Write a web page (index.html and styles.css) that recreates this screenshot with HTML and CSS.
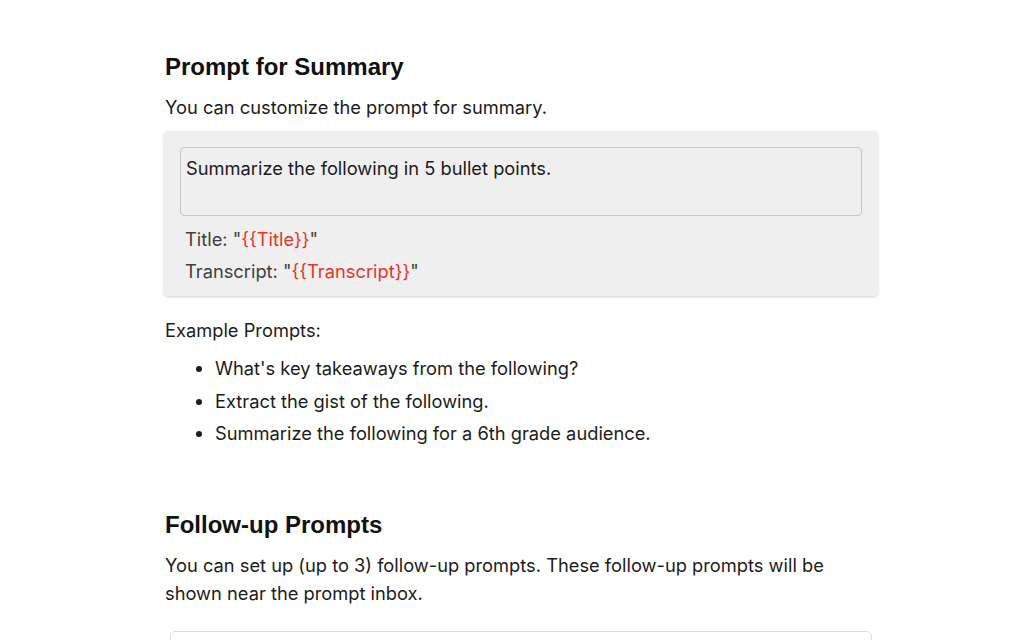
FILE: index.html
```html
<!DOCTYPE html>
<html>
<head>
<meta charset="utf-8">
<link rel="stylesheet" href="styles.css">
</head>
<body>
<main class="page">
  <section class="section">
    <h2 class="title">Prompt for Summary</h2>
    <p class="desc">You can customize the prompt for summary.</p>
    <div class="prompt-card">
      <div class="prompt-input">Summarize the following in 5 bullet points.</div>
      <div class="var-line first">Title: "<span class="var">{{Title}}</span>"</div>
      <div class="var-line">Transcript: "<span class="var">{{Transcript}}</span>"</div>
    </div>
    <p class="examples-label">Example Prompts:</p>
    <ul class="examples">
      <li>What's key takeaways from the following?</li>
      <li>Extract the gist of the following.</li>
      <li>Summarize the following for a 6th grade audience.</li>
    </ul>
  </section>
  <section class="section section-followup">
    <h2 class="title">Follow-up Prompts</h2>
    <p class="desc desc-wrap">You can set up (up to 3) follow-up prompts. These follow-up prompts will be shown near the prompt inbox.</p>
    <div class="followup-box"></div>
  </section>
</main>
</body>
</html>
```

FILE: styles.css
```css
html, body {
  margin: 0;
  padding: 0;
  background: #ffffff;
}
body {
  font-family: Inter, "Liberation Sans", Arial, sans-serif;
  color: #1c1c1c;
  font-size: 18.3px;
}
.page {
  width: 714px;
  margin-left: 164px;
  padding-top: 52px;
}
.section {
  display: flex;
  flex-direction: column;
}
.title {
  margin: 0 0 0 1px;
  font-family: "Liberation Sans", Arial, sans-serif;
  font-size: 24px;
  line-height: 30px;
  font-weight: 700;
  color: #111;
}
.desc {
  margin: 11px 0 0 1px;
  line-height: 28px;
}
.prompt-card {
  margin-top: 10px;
  background: #efefef;
  border-radius: 4px;
  box-shadow: 0 1px 3px rgba(0,0,0,0.18);
  padding: 16px 16px 9px 16px;
  display: flex;
  flex-direction: column;
}
.prompt-input {
  box-sizing: border-box;
  height: 69px;
  border: 1px solid #c6c6c6;
  border-radius: 4px;
  padding: 8px 5px 0 5px;
  line-height: 24px;
  color: #1c1c1c;
}
.var-line {
  padding-left: 5px;
  line-height: 32px;
  color: #3f3f3f;
}
.var-line.first {
  margin-top: 7px;
}
.var {
  color: #e8342a;
}
.examples-label {
  margin: 20px 0 0 1px;
  line-height: 28px;
}
.examples {
  margin: 8px 0 0 0;
  padding-left: 51px;
  list-style: disc;
}
.examples li {
  line-height: 32.5px;
}
.section-followup {
  margin-top: 60px;
}
.desc-wrap {
  margin-top: 11px;
  width: 690px;
}
.followup-box {
  margin: 24px 6px 0 6px;
  height: 40px;
  border: 1px solid #dcdcdc;
  border-radius: 5px;
  background: #fff;
}
```
